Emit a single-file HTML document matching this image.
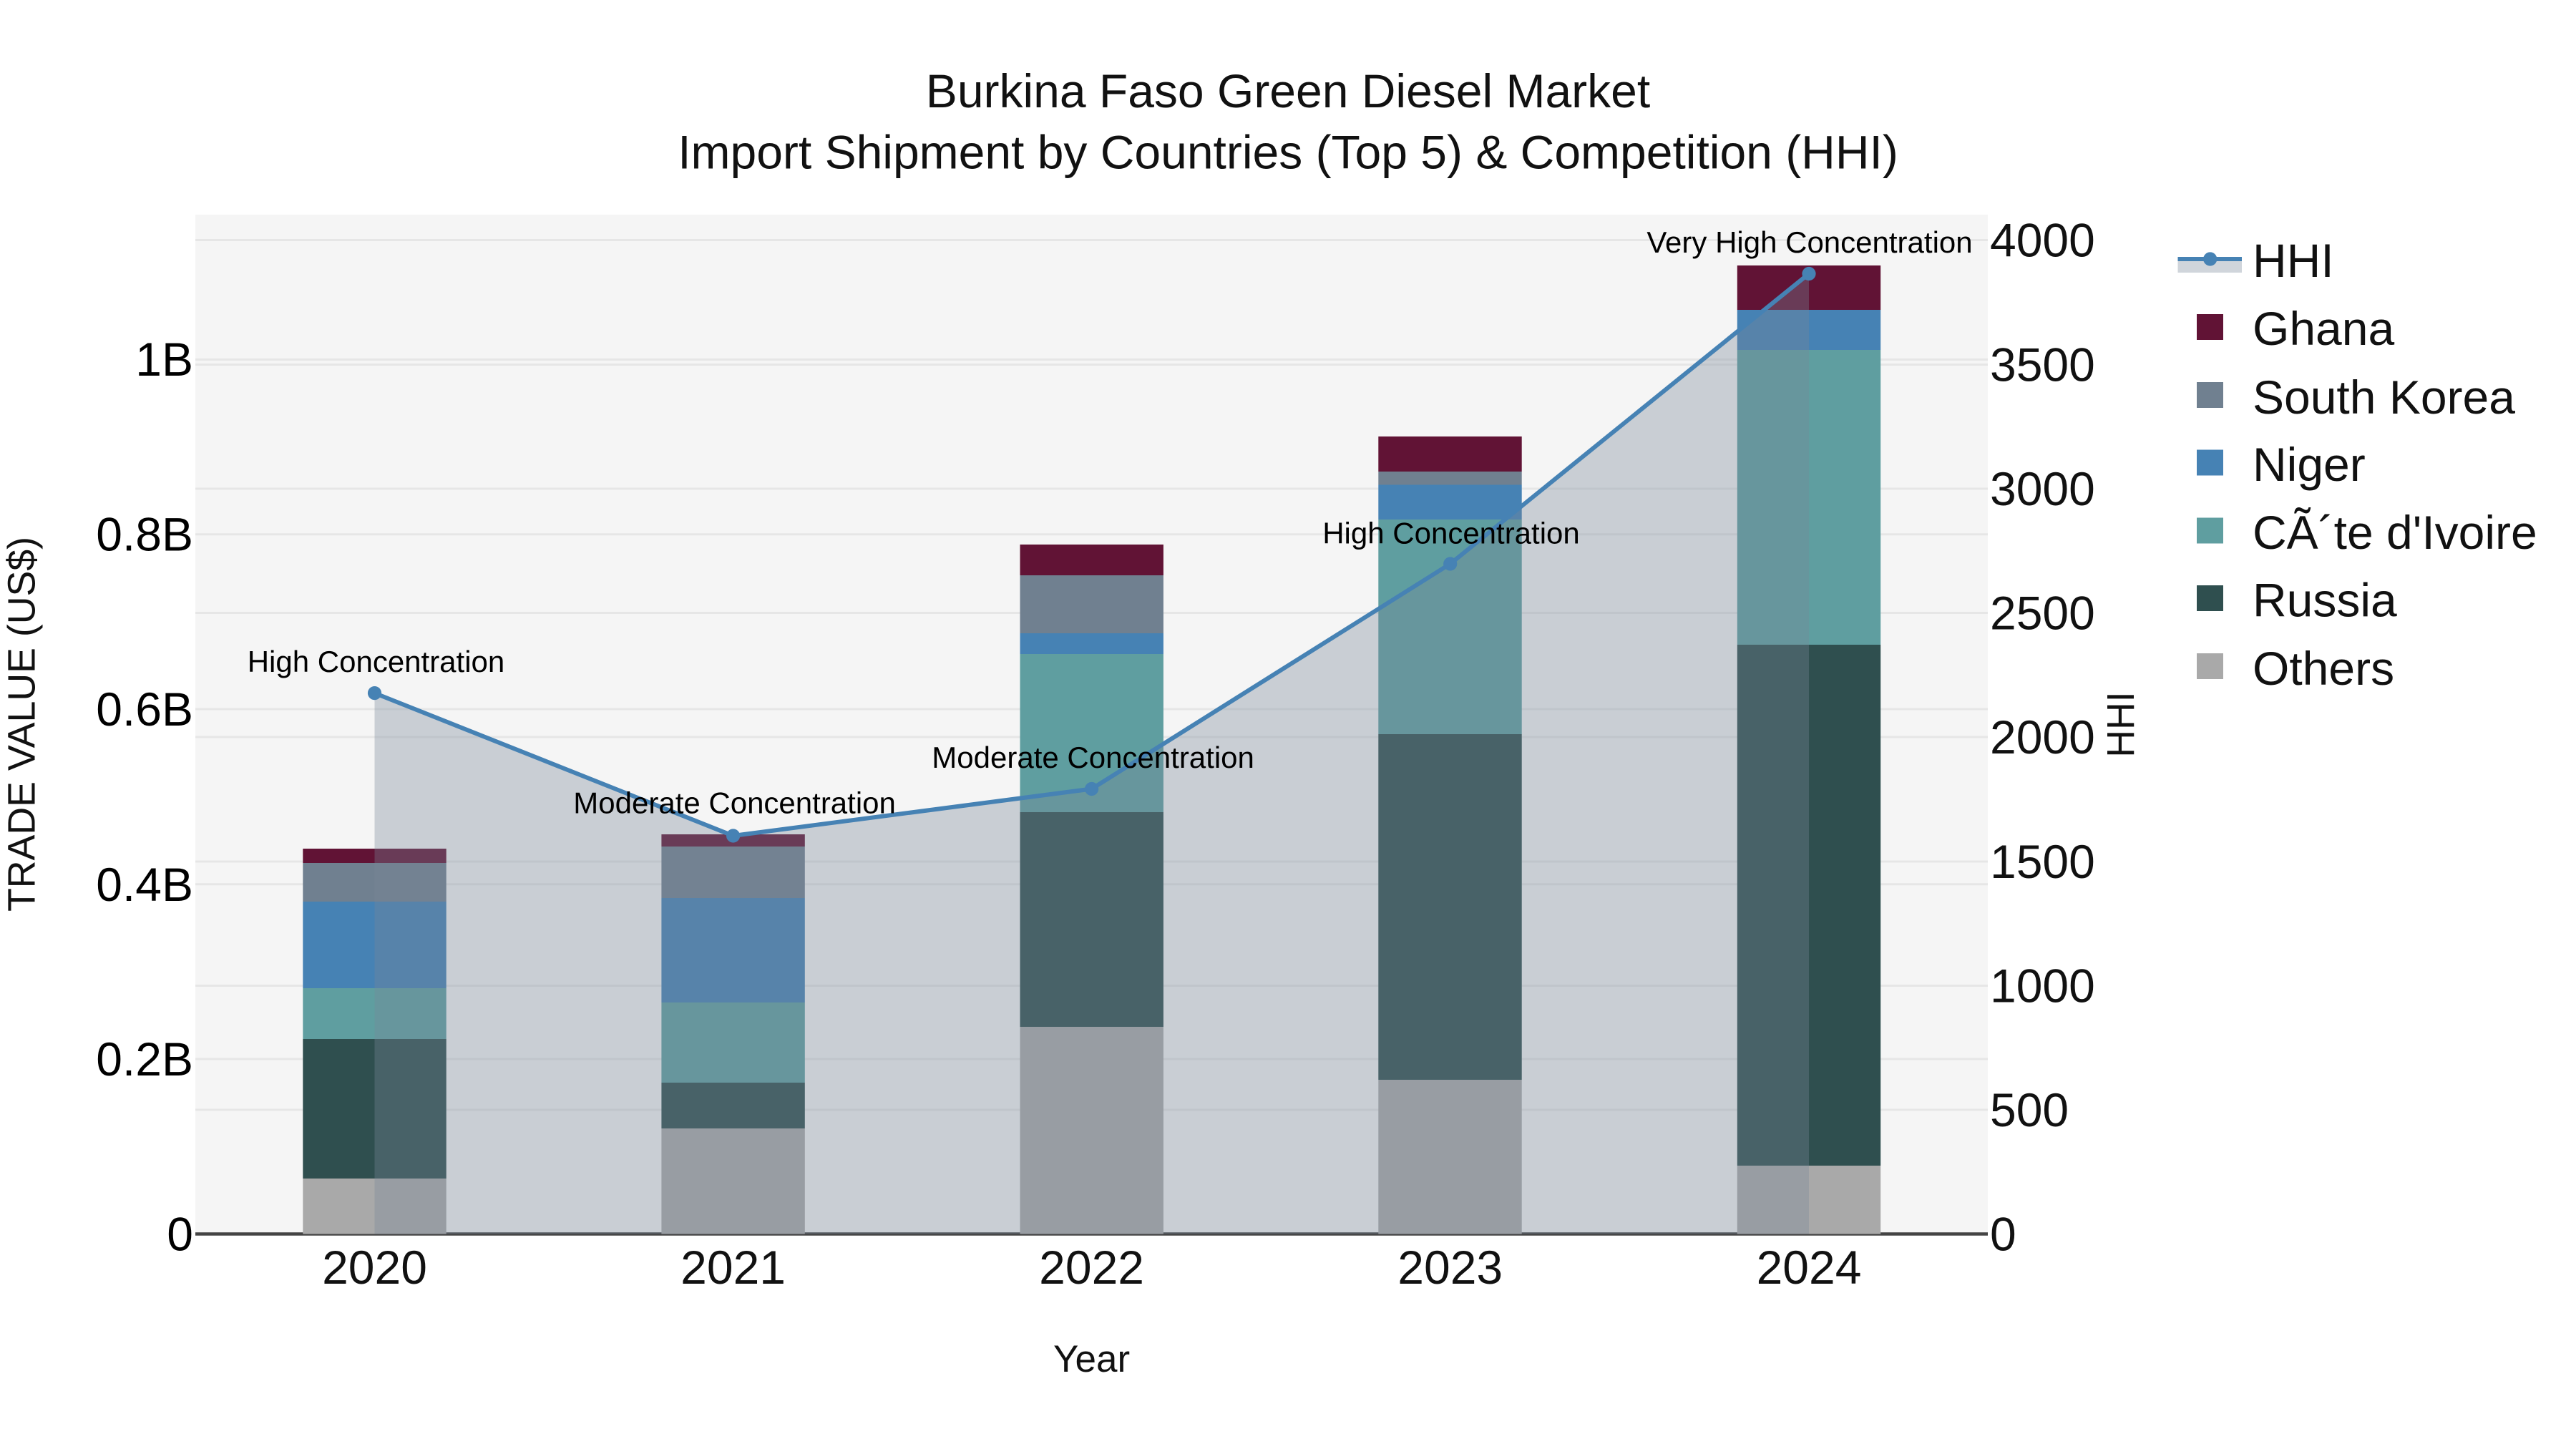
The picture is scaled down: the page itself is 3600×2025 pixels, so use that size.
<!DOCTYPE html>
<html lang="en">
<head>
<meta charset="utf-8">
<title>Burkina Faso Green Diesel Market</title>
<style>
html,body{margin:0;padding:0;background:#fff;width:3600px;height:2025px;overflow:hidden}
svg{display:block}
text{font-family:"Liberation Sans",Arial,sans-serif}
</style>
</head>
<body>
<svg xmlns="http://www.w3.org/2000/svg" width="3600" height="2025" viewBox="0 0 3600 2025">
<rect width="3600" height="2025" fill="#fff"/>
<rect x="273" y="300" width="2505" height="1425" fill="#f5f5f5"/>
<g stroke="#e6e6e6" stroke-width="3">
<line x1="273" x2="2778" y1="335.5" y2="335.5"/>
<line x1="273" x2="2778" y1="509.5" y2="509.5"/>
<line x1="273" x2="2778" y1="683" y2="683"/>
<line x1="273" x2="2778" y1="856.5" y2="856.5"/>
<line x1="273" x2="2778" y1="1030" y2="1030"/>
<line x1="273" x2="2778" y1="1204" y2="1204"/>
<line x1="273" x2="2778" y1="1377.5" y2="1377.5"/>
<line x1="273" x2="2778" y1="1551" y2="1551"/>
<line x1="273" x2="2778" y1="502.5" y2="502.5"/>
<line x1="273" x2="2778" y1="746.7" y2="746.7"/>
<line x1="273" x2="2778" y1="991" y2="991"/>
<line x1="273" x2="2778" y1="1235.8" y2="1235.8"/>
<line x1="273" x2="2778" y1="1480" y2="1480"/>
</g>
<line x1="273" x2="2778" y1="1724.5" y2="1724.5" stroke="#444" stroke-width="4.6"/>

<!-- 2020 -->
<g>
<rect x="423.3" width="200.4" y="1647" height="77.5" fill="#a9a9a9"/>
<rect x="423.3" width="200.4" y="1452" height="195" fill="#2f4f4f"/>
<rect x="423.3" width="200.4" y="1381" height="71" fill="#5f9ea0"/>
<rect x="423.3" width="200.4" y="1260" height="121" fill="#4682b4"/>
<rect x="423.3" width="200.4" y="1206" height="54" fill="#708090"/>
<rect x="423.3" width="200.4" y="1186" height="20" fill="#611335"/>
</g>
<!-- 2021 -->
<g>
<rect x="924.4" width="200.4" y="1577" height="147.5" fill="#a9a9a9"/>
<rect x="924.4" width="200.4" y="1513" height="64" fill="#2f4f4f"/>
<rect x="924.4" width="200.4" y="1401" height="112" fill="#5f9ea0"/>
<rect x="924.4" width="200.4" y="1255" height="146" fill="#4682b4"/>
<rect x="924.4" width="200.4" y="1183" height="72" fill="#708090"/>
<rect x="924.4" width="200.4" y="1166" height="17" fill="#611335"/>
</g>
<!-- 2022 -->
<g>
<rect x="1425.5" width="200.4" y="1435" height="289.5" fill="#a9a9a9"/>
<rect x="1425.5" width="200.4" y="1135" height="300" fill="#2f4f4f"/>
<rect x="1425.5" width="200.4" y="914" height="221" fill="#5f9ea0"/>
<rect x="1425.5" width="200.4" y="885" height="29" fill="#4682b4"/>
<rect x="1425.5" width="200.4" y="804" height="81" fill="#708090"/>
<rect x="1425.5" width="200.4" y="761" height="43" fill="#611335"/>
</g>
<!-- 2023 -->
<g>
<rect x="1926.3" width="200.4" y="1509" height="215.5" fill="#a9a9a9"/>
<rect x="1926.3" width="200.4" y="1026" height="483" fill="#2f4f4f"/>
<rect x="1926.3" width="200.4" y="726" height="300" fill="#5f9ea0"/>
<rect x="1926.3" width="200.4" y="677.5" height="48.5" fill="#4682b4"/>
<rect x="1926.3" width="200.4" y="659" height="18.5" fill="#708090"/>
<rect x="1926.3" width="200.4" y="610" height="49" fill="#611335"/>
</g>
<!-- 2024 -->
<g>
<rect x="2427.8" width="200.4" y="1629" height="95.5" fill="#a9a9a9"/>
<rect x="2427.8" width="200.4" y="901" height="728" fill="#2f4f4f"/>
<rect x="2427.8" width="200.4" y="489" height="412" fill="#5f9ea0"/>
<rect x="2427.8" width="200.4" y="433" height="56" fill="#4682b4"/>
<rect x="2427.8" width="200.4" y="371" height="62" fill="#611335"/>
</g>

<!-- HHI area and line -->
<polygon points="523.5,968.6 1024.6,1168 1525.6,1102.5 2026.7,788 2528,382.5 2528,1724.5 523.5,1724.5" fill="rgba(119,136,153,0.35)"/>
<polyline points="523.5,968.6 1024.6,1168 1525.6,1102.5 2026.7,788 2528,382.5" fill="none" stroke="#4682b4" stroke-width="6" stroke-linejoin="round"/>
<g fill="#4682b4">
<circle cx="523.5" cy="968.6" r="9.6"/>
<circle cx="1024.6" cy="1168" r="9.6"/>
<circle cx="1525.6" cy="1102.5" r="9.6"/>
<circle cx="2026.7" cy="788" r="9.6"/>
<circle cx="2528" cy="382.5" r="9.6"/>
</g>

<!-- annotations -->
<g font-size="42" fill="#000" text-anchor="middle">
<text x="525.5" y="939">High Concentration</text>
<text x="1026.6" y="1136.5">Moderate Concentration</text>
<text x="1527.6" y="1073">Moderate Concentration</text>
<text x="2028" y="759.5">High Concentration</text>
<text x="2529" y="353">Very High Concentration</text>
</g>

<!-- title -->
<g font-size="66" fill="#111" text-anchor="middle">
<text x="1800" y="150">Burkina Faso Green Diesel Market</text>
<text x="1800" y="235.5">Import Shipment by Countries (Top 5) &amp; Competition (HHI)</text>
</g>

<!-- left ticks -->
<g font-size="66" fill="#000" text-anchor="end">
<text x="270" y="525">1B</text>
<text x="270" y="769.7">0.8B</text>
<text x="270" y="1014">0.6B</text>
<text x="270" y="1258.8">0.4B</text>
<text x="270" y="1503">0.2B</text>
<text x="270" y="1747.5">0</text>
</g>
<!-- right ticks -->
<g font-size="66" fill="#111">
<text x="2781" y="358.5">4000</text>
<text x="2781" y="532.5">3500</text>
<text x="2781" y="706">3000</text>
<text x="2781" y="879.5">2500</text>
<text x="2781" y="1053">2000</text>
<text x="2781" y="1227">1500</text>
<text x="2781" y="1400.5">1000</text>
<text x="2781" y="1574">500</text>
<text x="2781" y="1747.5">0</text>
</g>
<!-- x ticks -->
<g font-size="66" fill="#111" text-anchor="middle">
<text x="523.5" y="1794">2020</text>
<text x="1024.6" y="1794">2021</text>
<text x="1525.6" y="1794">2022</text>
<text x="2026.7" y="1794">2023</text>
<text x="2528" y="1794">2024</text>
</g>
<text x="1525.6" y="1917" font-size="53" fill="#111" text-anchor="middle">Year</text>
<text transform="translate(48.6 1012) rotate(-90)" font-size="53.7" fill="#111" text-anchor="middle">TRADE VALUE (US$)</text>
<text transform="translate(2982 1012.5) rotate(-90)" font-size="53.5" fill="#111" text-anchor="middle">HHI</text>

<!-- legend -->
<rect x="3043.5" y="362" width="89.5" height="19" fill="rgba(119,136,153,0.35)"/>
<line x1="3043.5" x2="3133" y1="362" y2="362" stroke="#4682b4" stroke-width="6"/>
<circle cx="3088.7" cy="362" r="9.6" fill="#4682b4"/>
<rect x="3070" y="439" width="37" height="36" fill="#611335"/>
<rect x="3070" y="534" width="37" height="36" fill="#708090"/>
<rect x="3070" y="628.5" width="37" height="36" fill="#4682b4"/>
<rect x="3070" y="723.5" width="37" height="36" fill="#5f9ea0"/>
<rect x="3070" y="818" width="37" height="36" fill="#2f4f4f"/>
<rect x="3070" y="913" width="37" height="36" fill="#a9a9a9"/>
<g font-size="66" fill="#111">
<text x="3148" y="387">HHI</text>
<text x="3148" y="482">Ghana</text>
<text x="3148" y="578">South Korea</text>
<text x="3148" y="672">Niger</text>
<text x="3148" y="767">CÃ´te d'Ivoire</text>
<text x="3148" y="861.5">Russia</text>
<text x="3148" y="957">Others</text>
</g>
</svg>
</body>
</html>
